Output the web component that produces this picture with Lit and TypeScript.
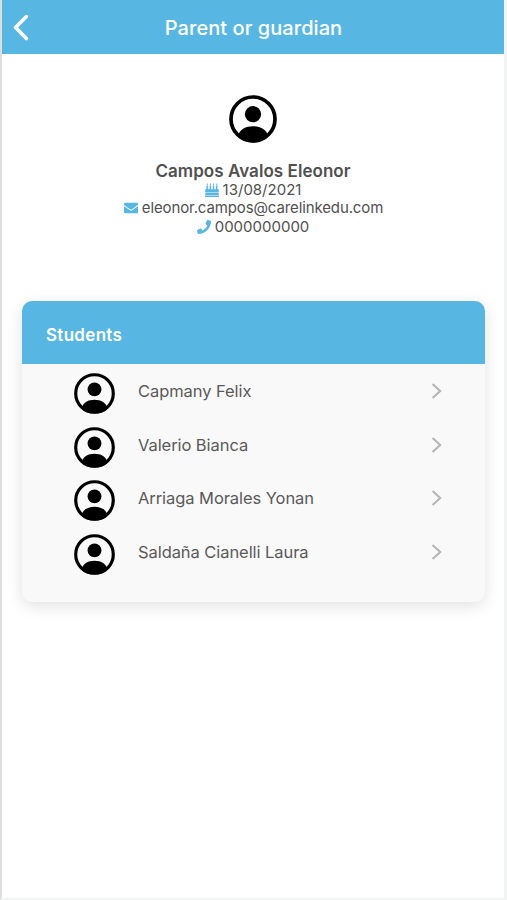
import { LitElement, html, css } from "lit";
import { customElement, property } from "lit/decorators.js";

@customElement("user-avatar")
class UserAvatar extends LitElement {
  static styles = css`
    :host { display: block; }
    svg { display: block; width: 100%; height: 100%; }
  `;
  render() {
    return html`<svg viewBox="0 0 48 48">
      <defs><clipPath id="disc"><circle cx="24" cy="24" r="23.5" /></clipPath></defs>
      <circle cx="24" cy="24" r="22" fill="none" stroke="#000" stroke-width="3.7" />
      <circle cx="24" cy="19.2" r="8.1" fill="#000" />
      <path d="M9.5 39.500 C11 34.500 16.500 31.200 24 31.200 S37 34.500 38.500 39.500 V48 H9.500z" fill="#000" clip-path="url(#disc)" />
    </svg>`;
  }
}

@customElement("student-row")
class StudentRow extends LitElement {
  @property() name = "";
  static styles = css`
    :host { display: flex; align-items: flex-start; height: 53.5px; }
    user-avatar { width: 41px; height: 41px; flex: none; }
    .name {
      flex: 1; margin-left: 23px; margin-top: 8px; line-height: 20px;
      font-size: 16.5px; letter-spacing: -0.07px; color: #5a5a5a; white-space: nowrap;
    }
    .chevron { width: 12px; height: 18px; margin-top: 9px; flex: none; display: block; }
  `;
  render() {
    return html`<user-avatar></user-avatar>
      <span class="name">${this.name}</span>
      <svg class="chevron" viewBox="0 0 12 18">
        <path d="M1.600 2 L9.200 9 L1.600 16" fill="none" stroke="#b5b5b5" stroke-width="2.1" />
      </svg>`;
  }
}

@customElement("app-root")
class AppRoot extends LitElement {
  static styles = css`
    :host {
      display: flex; flex-direction: column; box-sizing: border-box; height: 900px;
      border: solid #f2f3f3; border-width: 0 3px 2px 2px; border-left-color: #dedede;
      background: #fff; overflow: hidden; color: #505050;
      font-family: Inter, "Liberation Sans", sans-serif;
    }
    header {
      display: grid; grid-template-columns: 40px 1fr 40px; align-items: center;
      height: 54px; background: #58b7e2; color: #fff; flex: none;
    }
    .back { display: block; width: 18px; height: 28px; margin-left: 9px; }
    h1 { margin: 2px 0 0 1px; text-align: center; font-size: 20px; line-height: 28px; font-weight: 500; letter-spacing: 0.05px; white-space: nowrap; }
    .profile { display: flex; flex-direction: column; align-items: center; padding-top: 41px; height: 206px; flex: none; }
    .profile user-avatar { width: 48px; height: 48px; }
    h2 { margin: 18px 0 0; font-size: 17px; line-height: 20px; font-weight: 600; letter-spacing: 0.05px; white-space: nowrap; }
    .line { display: flex; align-items: center; gap: 4px; height: 18.3px; line-height: 18px; font-size: 15px; white-space: nowrap; }
    .email { letter-spacing: -0.12px; padding-left: 1px; }
    .line svg { display: block; fill: #58b7e2; width: 14px; height: 14px; }
    .card {
      margin: 0 19px 0 20px; height: 301px; border-radius: 10px; background: #f9f9f9;
      overflow: hidden; box-shadow: 0 4px 16px rgba(0, 0, 0, 0.12); flex: none;
    }
    h3 {
      margin: 0; padding: 3px 24px 0; height: 60px; line-height: 62px; background: #58b7e2;
      color: #fff; font-size: 17px; font-weight: 600; letter-spacing: 0.3px;
    }
    .rows { padding: 9px 42px 0 52px; }
  `;

  students = ["Capmany Felix", "Valerio Bianca", "Arriaga Morales Yonan", "Saldaña Cianelli Laura"];

  render() {
    return html`
      <header>
        <svg class="back" viewBox="0 0 18 28">
          <path d="M15.4 3.6 L4.6 14.6 L15.4 25.6" fill="none" stroke="#fff" stroke-width="3.5" stroke-linecap="round" stroke-linejoin="round" />
        </svg>
        <h1>Parent or guardian</h1>
      </header>
      <section class="profile">
        <user-avatar></user-avatar>
        <h2>Campos Avalos Eleonor</h2>
        <div class="line date">
          <svg viewBox="0 0 14 14">
            <path d="M0 12.6h14V14H0z M.3 6.2h13.4v3H.3z M.3 9.8h13.4v2.3H.3z M1.4 2.6h1.5v4H1.4z M4.6 2.6h1.5v4H4.6z M7.8 2.6h1.5v4H7.8z M11 2.6h1.5v4H11z M2.2 0l.7 1.5-.7.7-.7-.7z M5.4 0l.7 1.5-.7.7-.7-.7z M8.6 0l.7 1.5-.7.7-.7-.7z M11.8 0l.7 1.5-.7.7-.7-.7z" />
          </svg>
          <span>13/08/2021</span>
        </div>
        <div class="line email">
          <svg viewBox="0 0 512 512">
            <path d="M502.300 190.800c3.900-3.100 9.700-.2 9.700 4.700V400c0 26.500-21.500 48-48 48H48c-26.500 0-48-21.500-48-48V195.600c0-5 5.700-7.800 9.700-4.700 22.400 17.400 52.100 39.500 154.100 113.600 21.100 15.400 56.700 47.800 92.200 47.600 35.700.3 72-32.800 92.300-47.600 102-74.100 131.600-96.300 154-113.700zM256 320c23.200.4 56.600-29.200 73.400-41.400 132.700-96.300 142.800-104.700 173.400-128.700 5.800-4.500 9.200-11.500 9.200-18.900v-19c0-26.500-21.500-48-48-48H48c-26.500 0-48 21.500-48 48v19c0 7.400 3.400 14.300 9.200 18.900 30.600 23.900 40.700 32.400 173.400 128.700 16.800 12.200 50.200 41.800 73.400 41.400z" />
          </svg>
          <span>eleonor.campos@carelinkedu.com</span>
        </div>
        <div class="line phone">
          <svg viewBox="0 0 512 512">
            <path d="M493.400 24.600l-104-24c-11.300-2.600-22.900 3.300-27.500 13.900l-48 112c-4.200 9.800-1.400 21.300 6.900 28l60.600 49.600c-36 76.700-98.900 140.500-177.200 177.200l-49.600-60.600c-6.800-8.300-18.200-11.100-28-6.900l-112 48C3.900 366.500-2 378.100.6 389.400l24 104C27.100 504.200 36.700 512 48 512c256.100 0 464-207.500 464-464 0-11.200-7.700-20.900-18.600-23.400z" />
          </svg>
          <span>0000000000</span>
        </div>
      </section>
      <section class="card">
        <h3>Students</h3>
        <div class="rows">
          ${this.students.map((s) => html`<student-row .name=${s}></student-row>`)}
        </div>
      </section>
    `;
  }
}
